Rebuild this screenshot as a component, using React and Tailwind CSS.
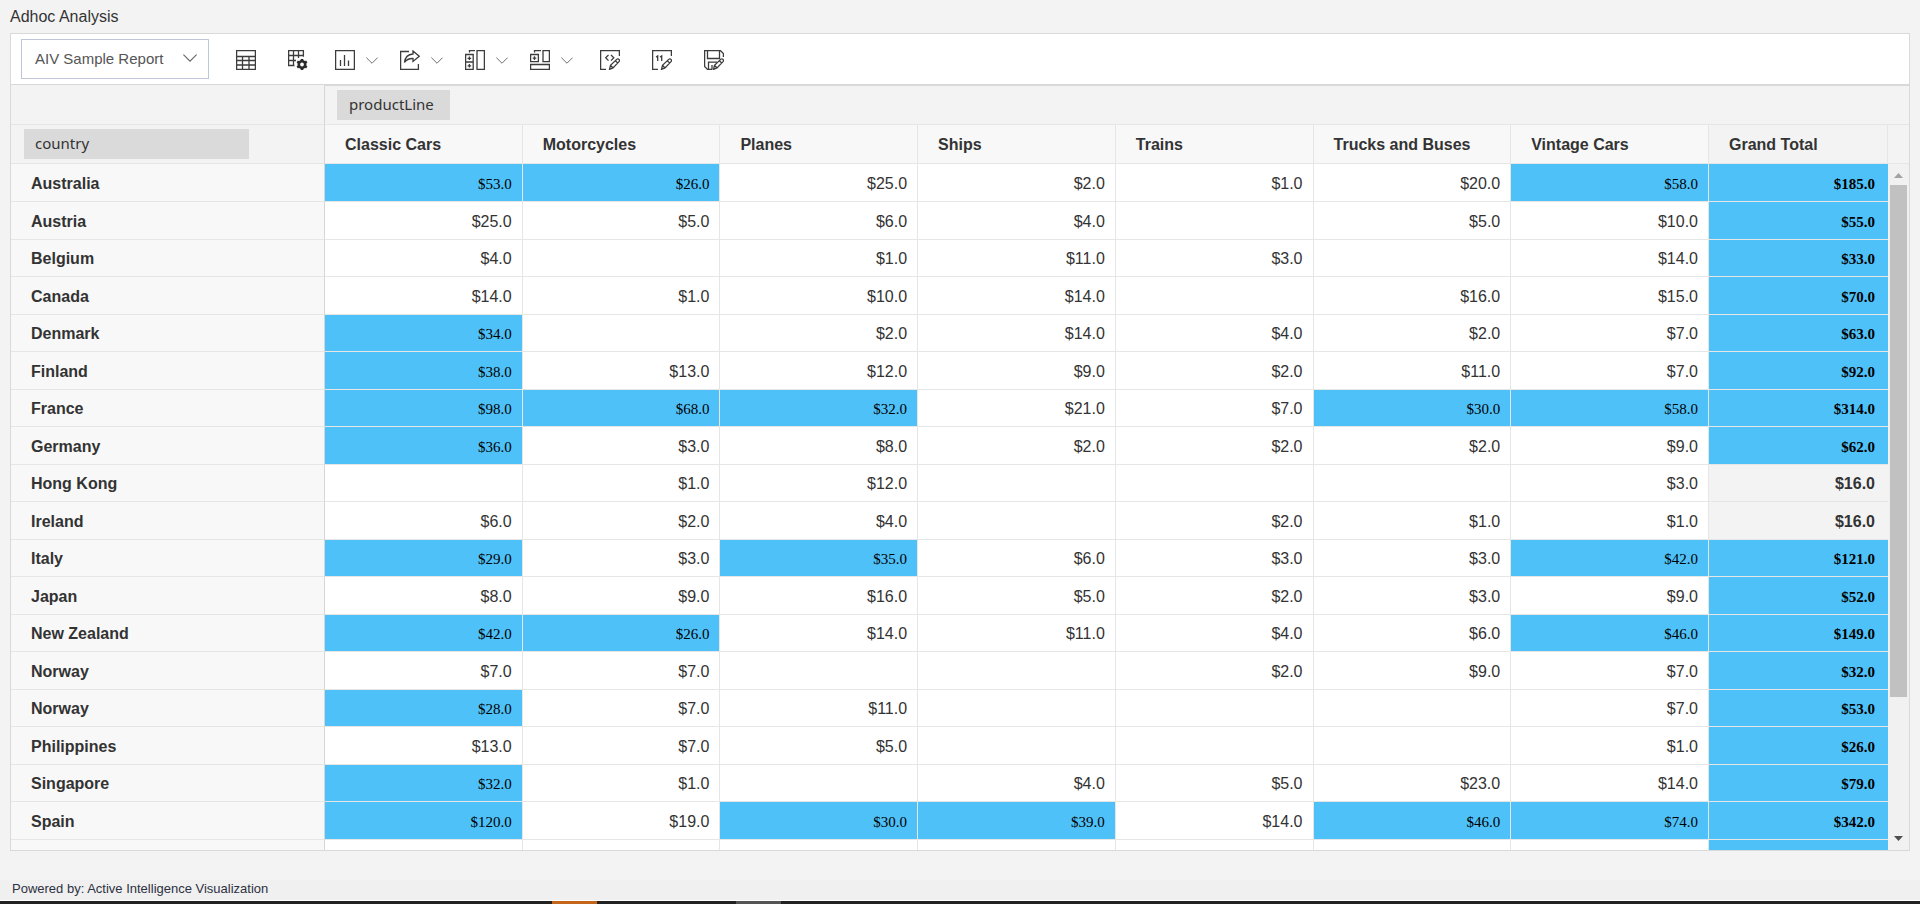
import React, { useState } from 'react';

const columns = ['Classic Cars', 'Motorcycles', 'Planes', 'Ships', 'Trains', 'Trucks and Buses', 'Vintage Cars'];

const rows = [
    { country: 'Australia', values: [53, 26, 25, 2, 1, 20, 58], total: 185 },
    { country: 'Austria', values: [25, 5, 6, 4, null, 5, 10], total: 55 },
    { country: 'Belgium', values: [4, null, 1, 11, 3, null, 14], total: 33 },
    { country: 'Canada', values: [14, 1, 10, 14, null, 16, 15], total: 70 },
    { country: 'Denmark', values: [34, null, 2, 14, 4, 2, 7], total: 63 },
    { country: 'Finland', values: [38, 13, 12, 9, 2, 11, 7], total: 92 },
    { country: 'France', values: [98, 68, 32, 21, 7, 30, 58], total: 314 },
    { country: 'Germany', values: [36, 3, 8, 2, 2, 2, 9], total: 62 },
    { country: 'Hong Kong', values: [null, 1, 12, null, null, null, 3], total: 16 },
    { country: 'Ireland', values: [6, 2, 4, null, 2, 1, 1], total: 16 },
    { country: 'Italy', values: [29, 3, 35, 6, 3, 3, 42], total: 121 },
    { country: 'Japan', values: [8, 9, 16, 5, 2, 3, 9], total: 52 },
    { country: 'New Zealand', values: [42, 26, 14, 11, 4, 6, 46], total: 149 },
    { country: 'Norway', values: [7, 7, null, null, 2, 9, 7], total: 32 },
    { country: 'Norway', values: [28, 7, 11, null, null, null, 7], total: 53 },
    { country: 'Philippines', values: [13, 7, 5, null, null, null, 1], total: 26 },
    { country: 'Singapore', values: [32, 1, null, 4, 5, 23, 14], total: 79 },
    { country: 'Spain', values: [120, 19, 30, 39, 14, 46, 74], total: 342 },
];

// values above this are highlighted
const LIMIT = 25;

const format = (value) => (value === null ? '' : `$${value.toFixed(1)}`);

function Icon({ children }) {
    return (
        <svg width="20" height="20" viewBox="0 0 20 20" fill="none" stroke="#3c3c3c" strokeWidth="1.3" aria-hidden="true">
            {children}
        </svg>
    );
}

function Chevron({ className }) {
    return (
        <svg className={className} viewBox="0 0 14 8" fill="none" stroke="#666" strokeWidth="1.1" aria-hidden="true">
            <path d="M.4.6L7 7.200 13.600.6" />
        </svg>
    );
}

const pencil = <path d="M9.500 19.400l1-4 6.200-6c.8-.8 1.600-.7 2.300 0s.7 1.400 0 2.200l-6 6.300zM15.400 10.700l2.400 2.400M10.600 15.500l2.300 2.300" />;

const tools = [
    {
        label: 'Table',
        icon: <path d="M.6.6h18.800v18.800H.6zM.6 6.500h18.800M.6 10.500h18.800M.6 15h18.800M6.500 6.500v13M13 6.500v13" />,
    },
    {
        label: 'Table settings',
        icon: (
            <>
                <path d="M6.500 15.500H.6V.6h14.800v6.200M.6 5.500h14.800M.6 10.500h7.400M5.500.6v14.900M10.500.6v7.400" />
                <circle cx="14" cy="14.500" r="3.200" stroke="#2b2b2b" strokeWidth="2.600" />
                <path d="M14 9v2M14 18v2M9.200 11.700l1.800 1M17 16.300l1.800 1M9.200 17.300l1.800-1M17 12.700l1.800-1" stroke="#2b2b2b" strokeWidth="2.600" />
            </>
        ),
    },
    {
        label: 'Chart',
        menu: true,
        icon: <path d="M.6.6h18.800v18.800H.6zM5.500 10v6M9.500 5v11M13.500 10.500V16" />,
    },
    {
        label: 'Export',
        menu: true,
        icon: (
            <>
                <path d="M9 1.500H.6v17.900h17.800V14" />
                <path d="M13 1l6.200 5.200L13 11.400V8.500C8.800 8.300 6.500 9.500 4.500 12.500 5 7.500 8 4.300 13 4z" />
            </>
        ),
    },
    {
        label: 'Sub totals',
        menu: true,
        icon: <path d="M4.500 2.500V.6H10M12 .6h7.400v18.800H12zM.6 4.500h7.600v14.900H.6zM.6 12h7.600M4.400 6.500v3.600M2.600 8.300h3.600M4.400 14v3.600M2.600 15.800h3.600" />,
    },
    {
        label: 'Grand totals',
        menu: true,
        icon: <path d="M4.500 2.500V.6H11M13 .6h6.400v11.100H13zM.6 4.500h7.800v7.200H.6zM.6 14.500h18.800v4.900H.6zM4.500 6.300V10M2.700 8.100h3.600" />,
    },
    {
        label: 'Conditional formatting',
        icon: (
            <>
                <path d="M6 19.400H.6V.6h18.800v5.400M8.500 5L5.700 7.800l2.800 2.800M11 5l2.800 2.800L11 10.600" />
                {pencil}
            </>
        ),
    },
    {
        label: 'Number formatting',
        icon: (
            <>
                <path d="M6 19.400H.6V.6h18.800v5.400" />
                <path d="M4 7l1.700-1v5M8 7l1.700-1v5" />
                {pencil}
            </>
        ),
    },
    {
        label: 'Save as',
        icon: (
            <>
                <path d="M8 19.400H3.500L.6 16.500V.6h15.800L19.400 3.600V7M3.500.6v7.900h12V.6M4.500 19.400v-7.200h8.500M8 19.400v-4.500" />
                {pencil}
            </>
        ),
    },
];

function Toolbar() {
    const [report, setReport] = useState('AIV Sample Report');

    return (
        <div className="flex items-center border-b border-[#d9d9d9] bg-white px-[10px] py-[5px]">
            <div className="relative">
                <select
                    aria-label="Report"
                    value={report}
                    onChange={(e) => setReport(e.target.value)}
                    className="h-10 w-[188px] appearance-none border border-[#c0c6d9] bg-white pl-[13px] text-[15px] text-[#555]"
                >
                    <option>AIV Sample Report</option>
                </select>
                <Chevron className="pointer-events-none absolute right-3 top-[15px] h-2 w-[14px]" />
            </div>
            <div className="ml-[22px] flex items-center gap-[22px] pt-0.5">
                {tools.map((tool) =>
                    tool.menu ? (
                        <button key={tool.label} type="button" aria-label={tool.label} className="flex items-center gap-[11px]">
                            <Icon>{tool.icon}</Icon>
                            <Chevron className="h-[7px] w-3" />
                        </button>
                    ) : (
                        <button key={tool.label} type="button" aria-label={tool.label} className="px-[5px]">
                            <Icon>{tool.icon}</Icon>
                        </button>
                    )
                )}
            </div>
        </div>
    );
}

function Cell({ value }) {
    if (value > LIMIT) {
        return (
            <td className="border-b border-r border-[#e6e6e6] bg-[#4fc1f9] pr-[10px] pt-0.5 text-right font-['Liberation_Serif'] text-[15px] text-black">
                {format(value)}
            </td>
        );
    }
    return <td className="border-b border-r border-[#e6e6e6] bg-white pr-[10px] pt-0.5 text-right">{format(value)}</td>;
}

function TotalCell({ value }) {
    if (value > LIMIT) {
        return (
            <td className="border-b border-[#e6e6e6] bg-[#4fc1f9] pr-[13px] pt-0.5 text-right font-['Liberation_Serif'] text-[15px] font-bold text-black">
                {format(value)}
            </td>
        );
    }
    return <td className="border-b border-[#e6e6e6] bg-[#f3f3f3] pr-[13px] pt-0.5 text-right font-bold">{format(value)}</td>;
}

function PivotTable() {
    return (
        <table className="w-full table-fixed border-separate border-spacing-0 leading-5">
            <colgroup>
                <col className="w-[314px]" />
                {columns.map((name) => (
                    <col key={name} />
                ))}
                <col className="w-[179px]" />
            </colgroup>
            <thead>
                <tr className="h-10">
                    <td className="border-b border-r border-b-[#e6e6e6] border-r-[#d6d6d6]"></td>
                    <td colSpan={8} className="border-b border-t border-b-[#e6e6e6] border-t-[#d9d9d9] pl-3">
                        <button type="button" className="block h-[30px] bg-[#dadada] pb-0.5 pl-3 pr-4 font-['Noto_Sans'] text-[15px]">
                            productLine
                        </button>
                    </td>
                </tr>
                <tr className="h-[39px] text-left">
                    <td className="border-b border-r border-b-[#e6e6e6] border-r-[#d6d6d6] pl-[13px]">
                        <button type="button" className="block h-[30px] w-[225px] bg-[#dadada] pb-0.5 pl-[11px] text-left font-['Noto_Sans'] text-[15px]">
                            country
                        </button>
                    </td>
                    {columns.map((name) => (
                        <th key={name} scope="col" className="border-b border-r border-[#e6e6e6] bg-[#f8f8f8] pl-5 pt-0.5">
                            {name}
                        </th>
                    ))}
                    <th scope="col" className="border-b border-r border-[#e6e6e6] pl-5 pt-0.5">
                        Grand Total
                    </th>
                </tr>
            </thead>
            <tbody>
                {rows.map((row, i) => (
                    <tr key={i} className="h-[38px] odd:not-first:h-[37px]">
                        <th scope="row" className="border-b border-r border-b-[#e6e6e6] border-r-[#d6d6d6] bg-[#f8f8f8] pl-5 pt-0.5 text-left">
                            {row.country}
                        </th>
                        {row.values.map((value, j) => (
                            <Cell key={j} value={value} />
                        ))}
                        <TotalCell value={row.total} />
                    </tr>
                ))}
                <tr className="h-[38px]">
                    <td className="border-r border-[#d6d6d6] bg-[#f8f8f8]"></td>
                    {columns.map((name) => (
                        <td key={name} className="border-r border-[#e6e6e6] bg-white"></td>
                    ))}
                    <td className="bg-[#4fc1f9]"></td>
                </tr>
            </tbody>
        </table>
    );
}

function ScrollBar() {
    return (
        <div className="flex w-[21px] shrink-0 flex-col">
            <div className="h-10 border-b border-t border-b-[#e6e6e6] border-t-[#d9d9d9]"></div>
            <div className="h-[39px] border-b border-[#e6e6e6]"></div>
            <div className="flex flex-1 flex-col items-center bg-[#f1f1f1]">
                <svg width="17" height="21" viewBox="0 0 17 21" fill="#a3a3a3" aria-hidden="true">
                    <path d="M4 14h9L8.500 9z" />
                </svg>
                <div className="w-[17px] grow-[512] bg-[#c1c1c1]"></div>
                <div className="grow-[132]"></div>
                <svg width="17" height="21" viewBox="0 0 17 21" fill="#505050" aria-hidden="true">
                    <path d="M4 7h9l-4.500 5z" />
                </svg>
            </div>
        </div>
    );
}

export default function App() {
    return (
        <div className="flex h-screen flex-col bg-[#f3f3f3] font-['Liberation_Sans',sans-serif] text-base text-[#333]">
            <h1 className="px-[10px] pb-1 pt-[5px] leading-6">Adhoc Analysis</h1>
            <main className="mx-[10px] flex min-h-0 flex-1 flex-col border border-[#d9d9d9]">
                <Toolbar />
                <div className="flex min-h-0 flex-1">
                    <div className="min-w-0 flex-1 overflow-hidden">
                        <PivotTable />
                    </div>
                    <ScrollBar />
                </div>
            </main>
            <footer className="mt-[29px] border-b border-white bg-[#f0f0f0] px-3 pb-0.5 text-[13px] leading-[18px] text-[#2d3142]">
                Powered by: Active Intelligence Visualization
            </footer>
            <div className="flex h-[3px] shrink-0 bg-[#222]">
                <div className="ml-[552px] w-[45px] bg-[#c4651c]"></div>
                <div className="ml-[139px] w-[45px] bg-[#555]"></div>
            </div>
        </div>
    );
}
